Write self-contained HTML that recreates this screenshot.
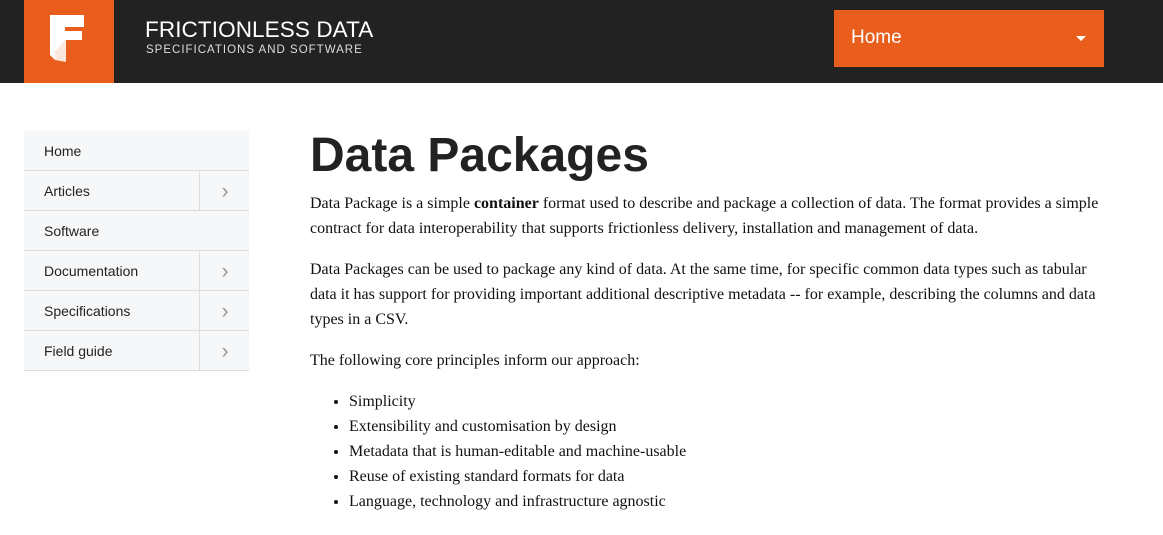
<!DOCTYPE html>
<html><head><style>
body{margin:0;width:1163px;height:535px;background:#fff;font-family:"Liberation Sans",sans-serif;position:relative;overflow:hidden}
.hdr{position:absolute;left:0;top:0;width:1163px;height:83px;background:#222}
.logo{position:absolute;left:24px;top:0;width:90px;height:83px;background:#e95e1c}
.t1{position:absolute;left:145px;top:17px;color:#fff;font-size:22.5px;letter-spacing:0.1px}
.t2{position:absolute;left:146px;top:44px;color:#ddd;font-size:11.5px;letter-spacing:1.0px}
.dd{position:absolute;left:834px;top:10px;width:270px;height:57px;background:#e95e1c;color:#fff;font-size:19px}
.dd span{position:absolute;left:17px;top:17px}
.dd i{position:absolute;right:18px;top:26px;border:5px solid transparent;border-top:5px solid #fff;border-bottom:0}
.nav{position:absolute;left:24px;top:131px;width:225px}
.nav div{height:39px;border-bottom:1px solid #ddd;background:#f6f7f8;font-size:14px;color:#222;position:relative}
.nav span{position:absolute;left:20px;top:12px}
.nav b{position:absolute;left:175px;top:0;width:50px;height:39px;border-left:1px solid #ddd;color:#999;font-weight:normal;text-align:center;line-height:40px;font-size:22px}
.main{position:absolute;left:310px;top:127px;width:795px;font-family:"Liberation Serif",serif;font-size:16px;color:#111;line-height:25px}
h1{font-family:"Liberation Sans",sans-serif;font-size:48px;margin:0 0 6px;line-height:58px;font-weight:bold;color:#222}
p{margin:0 0 16px}
ul{margin:0;padding-left:39px}
</style></head><body>
<div class="hdr"></div>
<div class="logo"><svg width="90" height="83"><path d="M31 15H60V27H41V31H58V40H42L31 52V60L26 55V15Z" fill="#fff"/><path d="M31 52L42 40V62L31 60Z" fill="#fff" opacity=".85"/></svg></div>
<div class="t1">FRICTIONLESS DATA</div>
<div class="t2">SPECIFICATIONS AND SOFTWARE</div>
<div class="dd"><span>Home</span><i></i></div>
<div class="nav">
<div><span>Home</span></div>
<div><span>Articles</span><b>›</b></div>
<div><span>Software</span></div>
<div><span>Documentation</span><b>›</b></div>
<div><span>Specifications</span><b>›</b></div>
<div><span>Field guide</span><b>›</b></div>
</div>
<div class="main">
<h1>Data Packages</h1>
<p>Data Package is a simple <b>container</b> format used to describe and package a collection of data. The format provides a simple contract for data interoperability that supports frictionless delivery, installation and management of data.</p>
<p>Data Packages can be used to package any kind of data. At the same time, for specific common data types such as tabular data it has support for providing important additional descriptive metadata -- for example, describing the columns and data types in a CSV.</p>
<p>The following core principles inform our approach:</p>
<ul><li>Simplicity</li><li>Extensibility and customisation by design</li><li>Metadata that is human-editable and machine-usable</li><li>Reuse of existing standard formats for data</li><li>Language, technology and infrastructure agnostic</li></ul>
</div>
</body></html>
